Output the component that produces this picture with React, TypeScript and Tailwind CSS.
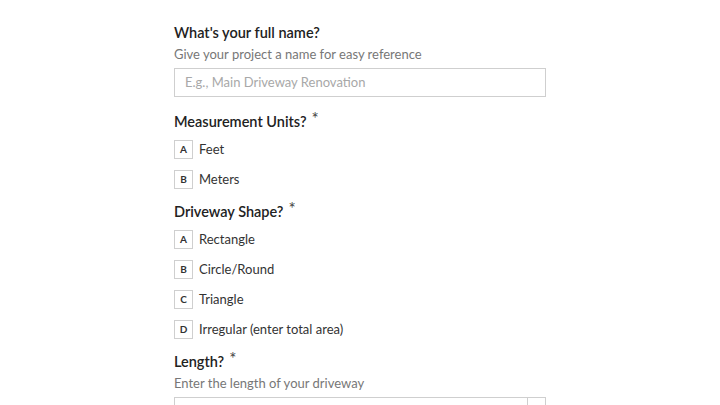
import React from 'react';

const font = { fontFamily: 'Lato, "Noto Sans", sans-serif' };

function Option({ letter, label }: { letter: string; label: string }) {
  return (
    <div className="flex items-center h-[19px] mb-[11px]">
      <div className="w-[19px] h-[19px] border border-[#cfcfcf] flex items-center justify-center text-[10px] font-bold text-[#333]">
        {letter}
      </div>
      <span className="ml-[6px] text-[13px] text-[#333]">{label}</span>
    </div>
  );
}

function Heading({ text, required }: { text: string; required?: boolean }) {
  return (
    <div className="flex items-start text-[14.5px] font-semibold text-[#222] leading-[20px]">
      {text}
      {required && <span className="ml-[5px] text-[17px] font-normal text-[#444] leading-[14px]">*</span>}
    </div>
  );
}

export default function App() {
  return (
    <div className="w-[720px] h-[405px] bg-white overflow-hidden" style={font}>
      <div className="w-[372px] ml-[174px] pt-[23px]">
        <Heading text="What's your full name?" />
        <div className="mt-[2px] text-[13px] text-[#777] leading-[18px]">Give your project a name for easy reference</div>
        <div className="mt-[5px] h-[29px] border border-[#cfcfcf] flex items-center px-[10px] text-[13px] text-[#a8a8a8]">
          E.g., Main Driveway Renovation
        </div>

        <div className="mt-[15px]"><Heading text="Measurement Units?" required /></div>
        <div className="mt-[8px]">
          <Option letter="A" label="Feet" />
          <Option letter="B" label="Meters" />
        </div>

        <div className="mt-[13px]"><Heading text="Driveway Shape?" required /></div>
        <div className="mt-[8px]">
          <Option letter="A" label="Rectangle" />
          <Option letter="B" label="Circle/Round" />
          <Option letter="C" label="Triangle" />
          <Option letter="D" label="Irregular (enter total area)" />
        </div>

        <div className="mt-[13px]"><Heading text="Length?" required /></div>
        <div className="mt-[2px] text-[13px] text-[#777] leading-[18px]">Enter the length of your driveway</div>
        <div className="mt-[5px] h-[29px] border border-[#cfcfcf] flex justify-end">
          <div className="w-[18px] border-l border-[#cfcfcf]" />
        </div>
      </div>
    </div>
  );
}
